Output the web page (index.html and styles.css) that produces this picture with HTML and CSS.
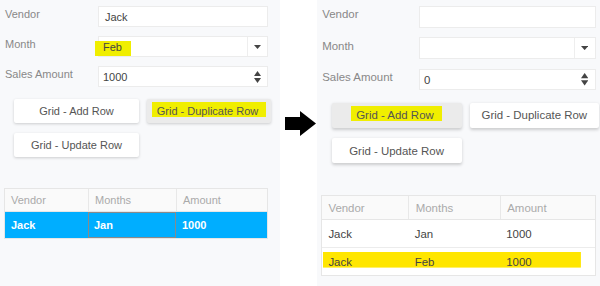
FILE: index.html
```html
<!DOCTYPE html>
<html>
<head>
  <meta charset="UTF-8">
  <title>Grid - Duplicate Row</title>
  <link rel="stylesheet" href="styles.css">
</head>
<body>
  <div class="shot">
    <!-- antes -->
    <section class="panel">
      <div class="field">
        <label>Vendor</label>
        <div class="input text">Jack</div>
      </div>
      <div class="field">
        <label>Month</label>
        <div class="input select">
          <span class="value"><span class="mark">Feb</span></span>
          <span class="caret"><svg width="7" height="4"><polygon points="0,0 7,0 3.5,4" /></svg></span>
        </div>
      </div>
      <div class="field">
        <label>Sales Amount</label>
        <div class="input number">
          <span class="value">1000</span>
          <span class="spin"><svg width="7" height="12"><polygon points="3.5,0 7,5 0,5" /><polygon points="0,7 7,7 3.5,12" /></svg></span>
        </div>
      </div>
      <div class="actions">
        <button class="btn">Grid - Add Row</button>
        <button class="btn is-active"><span class="mark">Grid - Duplicate Row</span></button>
        <button class="btn">Grid - Update Row</button>
      </div>
      <div class="grid">
        <div class="grid-row grid-head">
          <div class="cell">Vendor</div>
          <div class="cell">Months</div>
          <div class="cell">Amount</div>
        </div>
        <div class="grid-row is-selected">
          <div class="cell">Jack</div>
          <div class="cell is-focused">Jan</div>
          <div class="cell">1000</div>
        </div>
      </div>
    </section>

    <div class="arrow">
      <svg width="31" height="25"><polygon points="0,6 15,6 15,0 31,12.5 15,25 15,19 0,19" /></svg>
    </div>

    <!-- despues -->
    <section class="panel panel-after">
      <div class="field">
        <label>Vendor</label>
        <div class="input text"></div>
      </div>
      <div class="field">
        <label>Month</label>
        <div class="input select">
          <span class="value"></span>
          <span class="caret"><svg width="7" height="4"><polygon points="0,0 7,0 3.5,4" /></svg></span>
        </div>
      </div>
      <div class="field">
        <label>Sales Amount</label>
        <div class="input number">
          <span class="value">0</span>
          <span class="spin"><svg width="7" height="12"><polygon points="3.5,0 7,5 0,5" /><polygon points="0,7 7,7 3.5,12" /></svg></span>
        </div>
      </div>
      <div class="actions">
        <button class="btn is-active"><span class="mark">Grid - Add Row</span></button>
        <button class="btn">Grid - Duplicate Row</button>
        <button class="btn">Grid - Update Row</button>
      </div>
      <div class="grid">
        <div class="grid-row grid-head">
          <div class="cell">Vendor</div>
          <div class="cell">Months</div>
          <div class="cell">Amount</div>
        </div>
        <div class="grid-row">
          <div class="cell">Jack</div>
          <div class="cell">Jan</div>
          <div class="cell">1000</div>
        </div>
        <div class="grid-row is-new">
          <div class="cell">Jack</div>
          <div class="cell">Feb</div>
          <div class="cell">1000</div>
        </div>
      </div>
    </section>
  </div>
</body>
</html>
```

FILE: styles.css
```css
body {
  margin: 0;
  background: #fff;
  font-family: 'Liberation Sans', Arial, sans-serif;
  font-size: 11px;
  color: #444;
}
.shot {
  display: flex;
  width: 600px;
  height: 286px;
  overflow: hidden;
}
.panel {
  width: 280px;
  height: 286px;
  box-sizing: border-box;
  padding: 6px 0 0 5px;
  background: #f8f9fb;
  flex-shrink: 0;
}
.panel-after {
  width: 272px;
  height: 275px;
  zoom: 1.04;
}
.arrow {
  width: 37px;
  box-sizing: border-box;
  padding: 111px 0 0 5px;
  flex-shrink: 0;
}
.arrow polygon {
  fill: #000;
}
.field {
  display: flex;
  align-items: flex-start;
  height: 21px;
  margin-bottom: 9px;
}
.field:last-of-type {
  margin-bottom: 0;
}
.field label {
  width: 93px;
  padding-top: 2px;
  line-height: 13px;
  color: #888;
}
.input {
  width: 170px;
  height: 21px;
  box-sizing: border-box;
  display: flex;
  align-items: center;
  background: #fff;
  border: 1px solid #ececec;
  color: #444;
}
.input.text {
  padding-left: 6px;
}
.input .value {
  flex: 1;
  padding-left: 4px;
  align-self: stretch;
  display: flex;
  align-items: center;
}
.input.select .value {
  align-items: flex-end;
}
.caret {
  width: 19px;
  align-self: stretch;
  border-left: 1px solid #eee;
  display: flex;
  align-items: center;
  justify-content: center;
}
.spin {
  width: 20px;
  display: flex;
  justify-content: center;
}
.caret polygon,
.spin polygon {
  fill: #444;
}
.mark {
  display: inline-block;
  background: #f0ee00;
}
.select .mark {
  line-height: 11px;
  padding: 1px 9px 3px 8px;
  margin-left: -8px;
}
.actions {
  display: grid;
  grid-template-columns: 125px 124px;
  gap: 10px 8px;
  margin: 12px 0 0 9px;
}
.btn {
  height: 24px;
  padding: 0;
  border: none;
  border-radius: 2px;
  background: #fff;
  box-shadow: 0 1px 3px rgba(0,0,0,0.18);
  font: inherit;
  color: #555;
  display: flex;
  align-items: center;
  justify-content: center;
}
.btn.is-active {
  background: #ebebeb;
}
.btn .mark {
  line-height: 12px;
  padding: 3px 8px 0 5px;
  margin-bottom: 4px;
}
.grid {
  width: 264px;
  box-sizing: border-box;
  margin: 31px 0 0 -1px;
  border: 1px solid #e6e6e6;
  background: #fff;
}
.grid-row {
  display: grid;
  grid-template-columns: 83px 88px 91px;
  height: 27px;
  border-bottom: 1px solid #ececec;
  box-sizing: border-box;
}
.grid-row:last-child {
  border-bottom: none;
  height: 26px;
}
.cell {
  display: flex;
  align-items: center;
  padding-left: 6px;
  box-sizing: border-box;
}
.grid-head {
  height: 23px;
  background: #fafafa;
  color: #aaa;
  border-bottom: 1px solid #e6e6e6;
}
.grid-head .cell + .cell {
  border-left: 1px solid #e8e8e8;
}
.grid-row.is-selected {
  background: #00aeff;
  color: #fff;
  font-weight: bold;
}
.cell.is-focused {
  box-shadow: inset 0 0 0 1px #8a8a8a;
}
.grid-row.is-new {
  background: linear-gradient(#ffe600, #ffe600) 1px 3px / 248px 15px no-repeat;
}
```
